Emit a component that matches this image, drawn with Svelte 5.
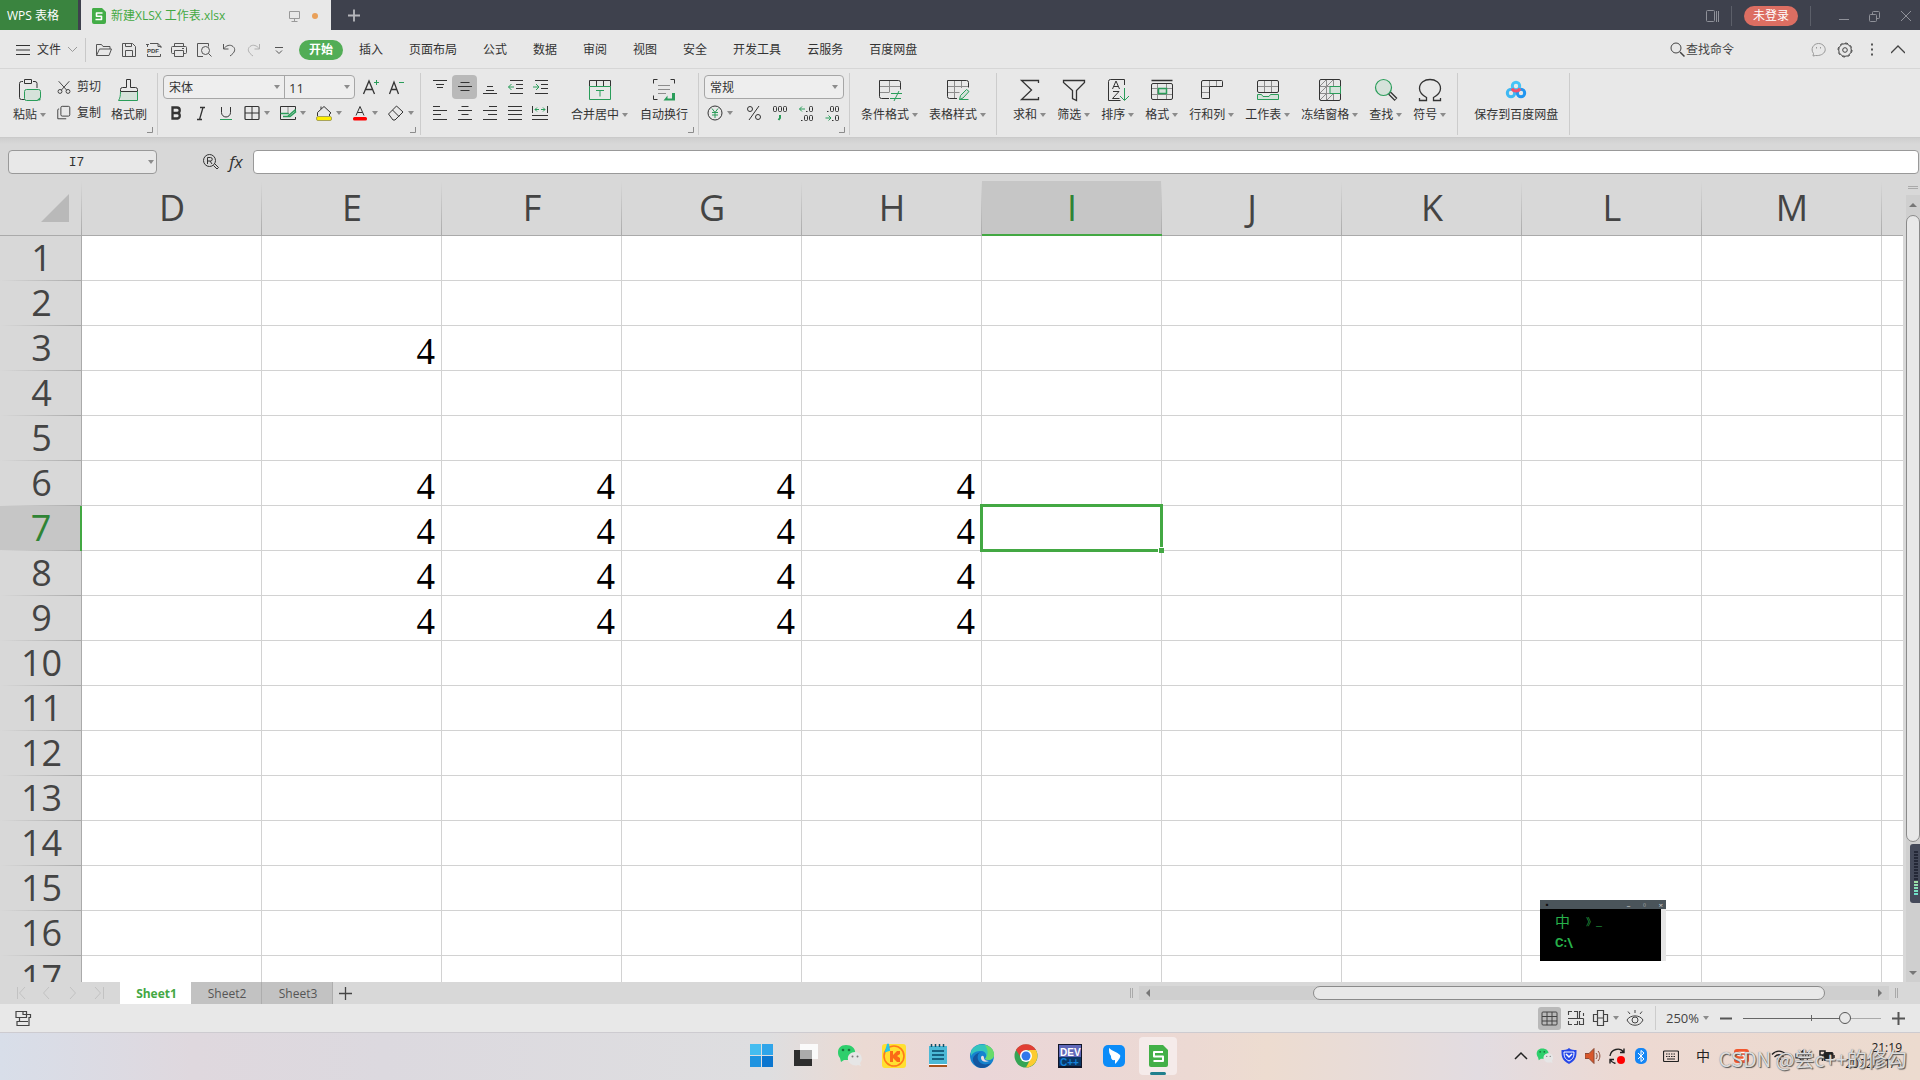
<script>
  const green = 'stroke="#2a9d5a"'
  const soft = 'stroke="#2a9d5a" fill="#d5e2da"'
  const grey = 'stroke="#8c8c8c"'

  const icons = {
    // title bar and menu
    doc: '<path d="M1 0h9l4 4v10a2 2 0 0 1-2 2H2a2 2 0 0 1-2-2V2a2 2 0 0 1 1-2z" fill="#43ad47" stroke="none"/><path d="M10.5 5h-6v3.2h5V11.5h-6" stroke="#fff" stroke-width="1.6" stroke-linejoin="round"/>',
    monitor: '<path d="M1.5 2.5h10v7h-10zM6.5 9.5v3M3.5 12.5h6"/>',
    plus: '<path d="M6.5 0v13M0 6.5h13" stroke-width="2"/>',
    thinPlus: '<path d="M6.5 0v13M0 6.5h13" stroke-width="1.3"/>',
    minus: '<path d="M0 6.5h12" stroke-width="2"/>',
    panel: '<rect x=".5" y="1.5" width="8" height="11" rx="1"/><path d="M10.5 2v11M12.5 2v11"/>',
    min: '<path d="M1 9.5h10"/>',
    restore: '<rect x=".5" y="4.5" width="7" height="7" rx="1"/><path d="M3.5 4.5v-2a1 1 0 0 1 1-1h5a1 1 0 0 1 1 1v5a1 1 0 0 1-1 1h-2"/>',
    close: '<path d="M1 1l10 10M11 1L1 11"/>',
    burger: '<path d="M0 2.5h14M0 7h14M0 11.5h14" stroke-width="1.2"/>',
    chevDown: '<path d="M0 1l4.500 4.500L9 1"/>',
    open: '<path d="M1.500 14.500v-11h5l1.500 2h7v2.500M1.500 14.500l3-6.500h12l-2.500 6.500z"/>',
    save: '<path d="M2.500 2.500h10l3 3v10h-13zM5.500 15.500v-6h7v6M5.500 2.500v3h6v-3"/>',
    pdf: '<path d="M2.500 6v-2.500M5 2.500h8l3 3v1.500M2.500 13v2.500h13v-2.500M1 3.500h3M13 2.500v3h3"/><text x="2" y="12" font-size="6" font-weight="bold" font-family="Liberation Sans" fill="#444" stroke="none">PDF</text>',
    print: '<path d="M4.500 5.500v-3h9v3M4.500 12.500h-2a1 1 0 0 1-1-1v-5a1 1 0 0 1 1-1h13a1 1 0 0 1 1 1v5a1 1 0 0 1-1 1h-2M4.500 9.500h9v6h-9zM12 7.500h2"/>',
    preview: '<path d="M8 15.500H2.500v-13h11v3"/><circle cx="10.500" cy="9.500" r="4"/><path d="M13.500 12.500l3 3"/>',
    undo: '<path d="M3.500 3v5h5M3.500 8C6 4.500 10 3 13 5.500s2 6-3 9.500"/>',
    redo: '<path d="M14.500 3v5h-5M14.500 8C12 4.500 8 3 5 5.500s-2 6 3 9.500" stroke="#b0b0b0"/>',
    more: '<path d="M5 6.500h8M6 9.500l3 3 3-3"/>',
    search: '<circle cx="6" cy="6" r="5"/><path d="M10 10l4.500 4.500" stroke-width="1.500"/>',
    smile: '<path d="M4.500 13.500L2 14l.5-2.500C-1 7 2.500 1.500 7.500 1.500S15 6 14 9s-5 5-9.500 4.500z" stroke="#999"/><path d="M5.500 5v1.500M9.500 5v1.500" stroke="#999"/>',
    gear: '<circle cx="8" cy="8" r="6.300"/><circle cx="8" cy="8" r="7" stroke-dasharray="2.750 2.750"/><circle cx="8" cy="8" r="2.300"/>',
    dots: '<path d="M8 2.500h2v2H8zM8 7.500h2v2H8zM8 12.500h2v2H8z" fill="#555" stroke="none"/>',
    chevUp: '<path d="M0 8l7-7 7 7" stroke-width="1.300"/>',

    // large ribbon icons
    paste: '<path d="M8 21.500H3.500a2 2 0 0 1-2-2v-14a2 2 0 0 1 2-2H5M15 3.500h2a2 2 0 0 1 2 2V10M6.500 1.500h7v4h-7z"/><path d="M8.500 11.500h12a2 2 0 0 1 2 2v6l-3 3h-11a2 2 0 0 1-2-2v-7a2 2 0 0 1 2-2z" ' + soft + '/><path d="M22.500 19l-4 3.500h3a1 1 0 0 0 1-1z" fill="#2a9d5a" stroke="none"/>',
    brush: '<path d="M3.500 13.500h17v9h-17z" fill="#d5e2da" stroke="none"/><path d="M3.500 13.500v-2a2 2 0 0 1 2-2h4v-8h4v8h5a2 2 0 0 1 2 2v2z"/><path d="M3.500 13.500c0 4-.5 7-2 9h19v-9" ' + green + '/>',
    merge: '<path d="M1.500 8.500V2.500h21v6M8.500 2.500v6M15.500 2.500v6"/><path d="M1.500 8.500h21v13h-21zM8 12.500h8M12 12.500v6" ' + green + '/>',
    wrap: '<path d="M1.500 5.500v-4h4M18.500 1.500h4v4M1.500 17.500v4h4"/><path d="M6 7.500h12M6 11.500h12M6 15.500h8" ' + grey + '/><path d="M20 15h3v7.500H11.500l4-5v3H20z" fill="#2a9d5a" stroke="none"/>',
    cond: '<path d="M11.500 2v12" ' + grey + '/><path d="M1.500 8.500h21M1.500 14.500h10" ' + grey + '/><path d="M11 20.500H3.500a2 2 0 0 1-2-2v-16h19a2 2 0 0 1 2 2v7"/><path d="M13 15.500h11M12 20.500h11M21 13l-5 10" ' + green + '/>',
    tstyle: '<path d="M8.500 2v18M15.500 2v8M1.500 8.500h21M1.500 14.500h12" ' + grey + '/><path d="M11 20.500H3.500a2 2 0 0 1-2-2v-16h19a2 2 0 0 1 2 2v5"/><path d="M13.500 21.500l1-4 6-6 2.500 2-6 6.500-3.500 1.500h9" ' + soft + '/>',
    sum: '<path d="M20.500 5v-2.500h-17l10 9.500-10 9.500h17V19" stroke-width="1.300"/>',
    filter: '<path d="M1.500 2.500h21v2l-8 8v10l-4-2v-8l-9-8z" stroke-width="1.300"/>',
    sort: '<path d="M18.500 7V1.500h-14a2 2 0 0 0-2 2v19h12"/><path d="M6.500 11l3.500-8 3.500 8M8 8.500h4M7 13.500h6l-6.500 7H13.500"/><path d="M18.500 10v12M14 18l4.500 4.500L23 18" ' + green + '/>',
    format: '<path d="M1.500 2.500h21" stroke-width="1.500"/><path d="M7.500 6v15M16.500 6v15M2 10.500h20M2 16.500h20" ' + grey + '/><rect x="1.500" y="5.500" width="21" height="16" rx="1.500"/><rect x="8.500" y="10.500" width="8" height="5" ' + soft + ' stroke-width="1.500"/>',
    rowcol: '<path d="M9.500 2v6M16.500 2v6M2 8.500h7M2 14.500h7" ' + grey + '/><path d="M3 2.500h18.500a1 1 0 0 1 1 1v5h-13v12h-7a1 1 0 0 1-1-1V4a1.500 1.500 0 0 1 1.500-1.500z"/>',
    sheet: '<path d="M8.500 2v12M15.500 2v12M2 8.500h20" ' + grey + '/><rect x="1.500" y="2.500" width="21" height="12" rx="1.500"/><path d="M1.500 16.500h4l1.500 2h6l1.500-2h8v5h-21z" ' + soft + '/>',
    freeze: '<path d="M8.500 2v20M15.500 2v20M2 8.500h20M2 15.500h20M2 8l6-6M9 8l6-6M2 15l6-6M2 22l6-6M9 22l6-6" ' + grey + '/><rect x="1.500" y="1.500" width="21" height="21" rx="1.500"/><path d="M12 8.500h10.500v7H12z" ' + soft + '/>',
    find: '<path d="M15.500 15l6.500 6.500" stroke-width="4"/><path d="M16 15.500l5.500 5.500" stroke="#e8e8e8" stroke-width="1.500"/><circle cx="9.500" cy="9.500" r="8" ' + soft + ' stroke-width="1.200"/>',
    omega: '<path d="M1.500 20v2.500h7v-3C4 17 1.500 14.500 1.500 10.500c0-12 21-12 21 0 0 4-2.500 6.500-7 9v3h7V20" stroke-width="1.300"/>',
    pan: '<circle cx="7" cy="15" r="3.700" stroke="#3fb8f3" stroke-width="3"/><circle cx="17" cy="15" r="3.700" stroke="#2196f0" stroke-width="3"/><circle cx="12" cy="8" r="3.700" stroke="#45c4f6" stroke-width="3"/><path d="M8 10.500a4.500 4.500 0 0 0 8 0" stroke="#f4506c" stroke-width="3"/>',

    // small ribbon icons
    cut: '<path d="M3 2.500l9 10M15 2.500l-9 10"/><circle cx="4.500" cy="14" r="2.200"/><circle cx="13.500" cy="14" r="2.200"/>',
    copy: '<rect x="5.500" y="1.500" width="10" height="11" rx="1.500"/><path d="M3.500 4.500h-.5a1 1 0 0 0-1 1V15.500h9.500"/>',
    fontUp: '<path d="M1.500 16L7 3l5.500 13M3.500 11.500h7" stroke-width="1.300"/><path d="M12 4.500h5M14.500 2v5" ' + green + '/>',
    fontDown: '<path d="M2.500 16L7 4l4.500 12M4 11.500h6" stroke-width="1.300"/><path d="M12 4.500h5" ' + green + '/>',
    bold: '<path d="M5.500 3.500h4.500a2.700 2.700 0 0 1 0 5.500H5.500zM5.500 9h5a2.800 2.800 0 0 1 0 5.500h-5z" stroke-width="2.300"/>',
    italic: '<path d="M8 3.500h5M5 15.500h5M11 3.500l-3.500 12" stroke-width="1.300"/>',
    underline: '<path d="M4.500 3v5.500a4.500 4.500 0 0 0 9 0V3"/><path d="M3 15.500h12" ' + green + '/>',
    borders: '<rect x="2" y="2.500" width="14" height="13" rx="1" stroke-width="1.200"/><path d="M9 2.500v13M2 9h14"/>',
    cells: '<path d="M9 3v6M2 9.500h8" ' + grey + '/><path d="M16.500 7V2.500h-15v13h15V13"/><path d="M1.500 9.500h8M9 12l7-6 .5 2-5.500 4.500H4" ' + green + ' stroke-width="1.500"/>',
    fill: '<path d="M2.500 12V8.500L9 2.500l7 6.500-1.500 1v2M6 5v-2.500"/><rect x="1.500" y="12.500" width="15" height="4" rx="1.500" fill="#ffef00" stroke="#a8a35a"/>',
    color: '<path d="M5 11.500L9 2.500l4 9M6.500 8.500h5"/><rect x="2" y="13" width="14" height="3.500" rx="1.500" fill="#f00" stroke="none"/>',
    eraser: '<path d="M1.500 10l8-8 6.500 6-8 8H6zM5.500 6l6.500 6.500"/>',
    vTop: '<path d="M2 2.500h14M5 6.500h8M6 9.500h6" stroke-width="1.200"/>',
    vMid: '<path d="M4.500 4.500h9M2 8.500h14M4.500 12.500h9" stroke-width="1.200"/>',
    vBot: '<path d="M6 8.500h6M5 12.500h8M2 15.500h14" stroke-width="1.200"/>',
    outdent: '<path d="M4 2.500h13M10 6.500h7M10 10.500h7M4 15.500h13"/><path d="M8 9H2.500M5.500 6l-3 3 3 3" ' + green + '/>',
    indent: '<path d="M4 2.500h13M10 6.500h7M10 10.500h7M4 15.500h13"/><path d="M2 9h5.500M5 6l3 3-3 3" ' + green + '/>',
    left: '<path d="M2 2.500h7M2 6.500h14M2 10.500h8M2 15.500h14" stroke-width="1.200"/>',
    center: '<path d="M5.500 2.500h7M2 6.500h14M5.500 10.500h7M2 15.500h14" stroke-width="1.200"/>',
    right: '<path d="M8 2.500h8M2 6.500h14M7 10.500h9M2 15.500h14" stroke-width="1.200"/>',
    justify: '<path d="M2 2.500h14M2 6.500h14M2 10.500h14M2 15.500h14" stroke-width="1.200"/>',
    spread: '<path d="M1.500 2v7M16.500 2v7M1 11.500h16M1 15.500h16"/><path d="M8 5.500H4M6 3.500l-2 2 2 2M10 5.500h4M12 3.500l2 2-2 2" ' + green + '/>',
    yen: '<circle cx="9" cy="9" r="7"/><path d="M6 4.500l3 4 3-4M9 8.500v5.500M6 8.500h6M6 11h6" ' + green + '/>',
    percent: '<circle cx="5" cy="5" r="2.500"/><circle cx="13" cy="13" r="2.500"/><path d="M14 2L4 16"/>',
    thousand: '<rect x="2.500" y="2.500" width="3" height="5" rx="1"/><rect x="7.500" y="2.500" width="3" height="5" rx="1"/><rect x="12.500" y="2.500" width="3" height="5" rx="1"/><path d="M9 11v3l-1.500 2" ' + green + ' stroke-width="2"/>',
    decMore: '<path d="M8 5H2.500M5 2.500L2.500 5 5 7.500" ' + green + '/><rect x="12.500" y="2.500" width="3" height="5" rx="1"/><rect x="7.500" y="11.500" width="3" height="5" rx="1"/><rect x="12.500" y="11.500" width="3" height="5" rx="1"/><path d="M9 7.500h1.500M4 16.500h1.500"/>',
    decLess: '<path d="M2.500 14h5.500M5.500 11.500L8 14l-2.500 2.500" ' + green + '/><rect x="7.500" y="2.500" width="3" height="5" rx="1"/><rect x="12.500" y="2.500" width="3" height="5" rx="1"/><rect x="12.500" y="11.500" width="3" height="5" rx="1"/><path d="M4 7.500h1.500M9 16.500h1.500"/>',
    arrow: '<path d="M0 0h6L3 4z" fill="#8c8c8c" stroke="none"/>',
    corner: '<path d="M5.500 0v5.500H0" ' + grey + '/>',
    nameZoom: '<circle cx="7.500" cy="7.500" r="6"/><path d="M5.500 11V4.500h3a1.500 1.500 0 0 1 0 3.500h-3M8 8l2 3M11.500 12.500l3.500 3.500 1.500-1.500-3.500-3.500"/>',

    // sheet navigation and status bar
    first: '<path d="M1.500 1v12M9 1L3.500 7 9 13"/>',
    prev: '<path d="M7 1L1.500 7 7 13"/>',
    next: '<path d="M2 1l5.500 6L2 13"/>',
    last: '<path d="M1 1l5.500 6L1 13M9.500 1v12"/>',
    macro: '<path d="M1 1.500h10.500v6H1zM8 1.500v3h3.500M11.500 4.500h4v3h-1.500v8h-12v-4h11M4.500 7.500v4" stroke-width="1.200"/>',
    grid: '<rect x="1" y="2" width="15" height="13" rx="1"/><path d="M1 6.500h15M1 11h15M6 2v13M11 2v13"/>',
    pageBreak: '<path d="M1.500 6V2.500H5M7 2.500h3.500v6.500M1.500 12v3.500H5M7 15.500h3.500V12M1 9.500h15.500M12.500 9V2.500h1.500M16.500 4v3M16.500 9.500v6h-4V12" stroke-width="1.100"/>',
    pageLayout: '<path d="M5.500 1.500h6v15h-6zM5.500 5.500h-4v7h4M11.500 5.500h4v7h-4M5.500 9h6" stroke-width="1.200"/>',
    eye: '<path d="M1 11c3-5.500 13-5.500 16 0-3 7-13 7-16 0z"/><circle cx="9" cy="11" r="3"/><path d="M9 1v3M2 2.500l2 2.500M16 2.500L14 5"/>',
    tri: '<path d="M0 4l4-4v8z" fill="#777" stroke="none"/>',

    // taskbar
    windows: '<path d="M1 1h11v11H1z" fill="#45bdf0" stroke="none"/><path d="M13 1h11v11H13z" fill="#2fa5ea" stroke="none"/><path d="M1 13h11v11H1z" fill="#1f94e0" stroke="none"/><path d="M13 13h11v11H13z" fill="#0b76cf" stroke="none"/>',
    tasks: '<path d="M1 7h18v16H1z" fill="#2e2e2e" stroke="none"/><path d="M7 1h18v15H7z" fill="#fafafa" stroke="none"/><path d="M7 7h12v9H7z" fill="#ababab" stroke="none"/>',
    wechat: '<path d="M3 15C-1 10 1 2 9 2s11 6 8 11-8 4-10 4l-3 2z" fill="#2ecf6c" stroke="none"/><circle cx="6" cy="7" r="1.300" fill="#17763c" stroke="none"/><circle cx="12" cy="7" r="1.300" fill="#17763c" stroke="none"/><path d="M23 20c4-4 1-11-5-11s-9 6-6 10 7 4 9 3l3 1z" fill="#e6e6e6" stroke="none"/><circle cx="15.500" cy="13.500" r="1" fill="#777" stroke="none"/><circle cx="20.500" cy="13.500" r="1" fill="#777" stroke="none"/>',
    kuwo: '<rect x="1" y="1" width="24" height="24" rx="3" fill="#ffe031" stroke="none"/><circle cx="13" cy="13" r="10" stroke="#ff7a1a" stroke-width="1.600"/><path d="M9 8h3v4l4-4h3v3l-3 2 3 2v4h-3l-4-4v4H9z" fill="#fb6b16" stroke="none"/><path d="M7 1l1 6-3 1z" stroke="#25c5e8" stroke-width="2"/>',
    notepad: '<path d="M4 3h18v19H4z" fill="#4cb9d6" stroke="none"/><path d="M4 21h18v3H4z" fill="#a9541d" stroke="none"/><path d="M4 21h18v1H4z" fill="#fff" stroke="none"/><path d="M6.500 1v3M10.500 1v3M14.500 1v3M18.500 1v3" stroke="#114f68" stroke-width="1.500"/><path d="M7 8h12M7 12h12M7 16h12" stroke="#176181" stroke-width="2"/>',
    edge: '<circle cx="13" cy="13" r="12" fill="#1683ce" stroke="none"/><path d="M2 9C5-2 24-1 25 12c0 5-6 6-9 4 3-4 0-8-4-8S4 9 2 13z" fill="#34c5bd" stroke="none"/><path d="M16 2c6 1 10 6 9 11-1 4-6 5-9 3 4-5 3-9 0-14z" fill="#69db69" stroke="none"/><path d="M9 12c-2 7 5 12 13 8-5 8-16 6-18-2-1-5 4-8 8-9-2 1-3 2-3 3z" fill="#14569f" stroke="none"/><path d="M15 15c0 2 2 3 5 3-4 2-8 0-8-3s3-3 3 0z" fill="#eedee1" stroke="none"/>',
    chrome: '<circle cx="13" cy="13" r="11.500" fill="#35a554" stroke="none"/><path d="M3 7a11.500 11.500 0 0 1 20 0H13l-4 9z" fill="#e13e34" stroke="none"/><path d="M23 7c4 8-1 17-10 17.500L18 15l-2-8z" fill="#fccb31" stroke="none"/><circle cx="13" cy="13" r="6" fill="#fff" stroke="none"/><circle cx="13" cy="13" r="4.500" fill="#3277ea" stroke="none"/>',
    dev: '<path d="M1 1h24v24H1z" fill="#111528" stroke="none"/><path d="M2 2h22v12H2z" fill="#6068b8" stroke="none"/><path d="M2 14h22v9H2z" fill="#0b3766" stroke="none"/><text x="3" y="13" font-size="10" font-weight="bold" font-family="Liberation Sans" fill="#fff" stroke="none">DEV</text><text x="3" y="23" font-size="10" font-weight="bold" font-family="Liberation Sans" fill="#1583dc" stroke="none">C++</text>',
    ding: '<rect x="2" y="2" width="22" height="22" rx="5" fill="#0c8cf8" stroke="none"/><path d="M8 5c3 3 8 4 11 7 1 2-1 4-3 7l-2 2 0-4c-4 1-4-3-4-4-2-2-2-5-2-8z" fill="#fff" stroke="none"/>',
    wps: '<path d="M4 2h14l5 5v15a2 2 0 0 1-2 2H6a2 2 0 0 1-2-2z" fill="#43b047" stroke="none"/><path d="M18 9H9v4.500h9V18H8.500" stroke="#fff" stroke-width="2" stroke-linejoin="round"/>',
    trayUp: '<path d="M2 11l6-6 6 6" stroke="#222" stroke-width="1.500"/>',
    shield: '<path d="M8 0c2 2 5 2 7.500 2 0 6 0 10-7.500 14C.5 12 .5 8 .5 2 3 2 6 2 8 0z" fill="#2748e8" stroke="none"/><path d="M3 4h10c0 5-1 7-5 9-4-2-5-4-5-9z" stroke="#fff" /><path d="M5 6l3 3 3-3" stroke="#fff" stroke-width="1.500"/>',
    horn: '<path d="M0 5.500h4l5-5v15l-5-5H0z" fill="#d9572b" stroke="#8b4a35"/><path d="M11 5c1.500 2 1.500 4 0 6M13 3c2.500 3 2.500 7 0 10" stroke="#8a4b39"/>',
    sync: '<path d="M1 8C2 1 11-1 14.500 4M15 .5v4h-4M1 15.500v-4h4M1.500 12c1 2 3 3 5 3.500" stroke="#222" stroke-width="1.400"/><circle cx="12" cy="12" r="4" fill="#f00" stroke="none"/>',
    bluetooth: '<rect x="2" y="0" width="12" height="16" rx="5" fill="#1686f5" stroke="none"/><path d="M5 5l6 6-3 2.500v-11L11 5l-6 6" stroke="#fff"/>',
    keyboard: '<rect x=".5" y="3" width="15" height="10.500" rx="1" stroke="#222" stroke-width="1.200"/><path d="M3 6h10M3 8.500h10" stroke="#222" stroke-dasharray="1.500 1"/><path d="M4 11h8" stroke="#222"/>',
    sogou: '<rect x="1" y="1" width="15" height="14" rx="3" fill="#f2572e" stroke="none"/><path d="M12.500 4.500H6c-2 0-2 3 0 3h4c2 0 2 4 0 4H4" stroke="#fff" stroke-width="1.600"/>',
    wifi: '<path d="M1 6.500c4-4.500 10-4.500 14 0M3.500 9c3-3 6-3 9 0M6 11.500c1.500-1.300 2.500-1.300 4 0" stroke="#222" stroke-width="1.300"/><circle cx="8" cy="13" r="1" fill="#222" stroke="none"/>',
    volume: '<path d="M1 6h3l4-3.500v11L4 10H1z" stroke="#222" stroke-width="1.200"/><path d="M10 6c1 1.500 1 2.500 0 4M12 4c2 3 2 5 0 8" stroke="#222"/>',
    battery: '<rect x="5" y="4.500" width="9" height="8" rx="1" fill="#222" stroke="#222"/><path d="M15 7v3M1 3h5v4H1zM3.500 7v6" stroke="#222" stroke-width="1.500"/>'
  }

  const quick = [
    ['open', '打开'], ['save', '保存'], ['pdf', '输出为PDF'], ['print', '打印'],
    ['preview', '打印预览'], ['undo', '撤销'], ['redo', '恢复'], ['more', '自定义']
  ]
  const menus = ['插入', '页面布局', '公式', '数据', '审阅', '视图', '安全', '开发工具', '云服务', '百度网盘']
  const aligns = [
    ['vTop', '顶端对齐'], ['vMid', '垂直居中'], ['vBot', '底端对齐'], ['outdent', '减少缩进'], ['indent', '增加缩进'],
    ['left', '左对齐'], ['center', '水平居中'], ['right', '右对齐'], ['justify', '两端对齐'], ['spread', '分散对齐']
  ]
  const tools = [
    ['sum', '求和'], ['filter', '筛选'], ['sort', '排序'], ['format', '格式'], ['rowcol', '行和列'],
    ['sheet', '工作表'], ['freeze', '冻结窗格'], ['find', '查找'], ['omega', '符号']
  ]

  const columns = ['D', 'E', 'F', 'G', 'H', 'I', 'J', 'K', 'L', 'M', '']
  const rows = Array.from({ length: 17 }, (_, i) => i + 1)
  const block = { E: 4, F: 4, G: 4, H: 4 }
  const values = { 3: { E: 4 }, 6: block, 7: block, 8: block, 9: block }
  const active = { col: 'I', row: 7 }

  const apps = [
    ['windows', '开始'], ['tasks', '任务视图'], ['wechat', '微信'], ['kuwo', '音乐'], ['notepad', '记事本'],
    ['edge', 'Edge'], ['chrome', 'Chrome'], ['dev', 'Dev-C++'], ['ding', '钉钉'], ['wps', 'WPS']
  ]

  let zoom = 76
  let formula = ''
  let cellName = 'I7'
</script>

{#snippet icon(name, w = 18, h = w, size = w, sizeH = h)}
  <svg width={size} height={sizeH} viewBox="0 0 {w} {h}" fill="none" stroke="currentColor" aria-hidden="true">
    {@html icons[name]}
  </svg>
{/snippet}

{#snippet big(name, label, arrow = true)}
  <button class="big">
    {@render icon(name, 24)}
    <span>{label}{#if arrow}{@render icon('arrow', 6, 4)}{/if}</span>
  </button>
{/snippet}

{#snippet drop(name, label)}
  <button class="drop" aria-label={label}>
    {@render icon(name)}
    {@render icon('arrow', 6, 4)}
  </button>
{/snippet}

<div class="window">
  <header class="titlebar">
    <button class="home">WPS 表格</button>
    <div class="doc">
      {@render icon('doc', 14, 16)}
      <span class="name">新建XLSX 工作表.xlsx</span>
      <span class="muted">{@render icon('monitor', 13, 14)}</span>
      <i class="unsaved"></i>
    </div>
    <button class="add" aria-label="新建">{@render icon('plus', 13, 13, 12)}</button>
    <div class="wincontrols">
      <button aria-label="标签列表">{@render icon('panel', 14)}</button>
      <i class="bar"></i>
      <button class="login">未登录</button>
      <i class="bar"></i>
      <button aria-label="最小化">{@render icon('min', 12)}</button>
      <button aria-label="还原">{@render icon('restore', 12)}</button>
      <button aria-label="关闭">{@render icon('close', 12)}</button>
    </div>
  </header>

  <nav class="menubar">
    <button class="file">
      {@render icon('burger', 14)}
      文件
      <span class="muted">{@render icon('chevDown', 9, 7)}</span>
    </button>
    <div class="quick">
      {#each quick as [name, label]}
        <button aria-label={label}>{@render icon(name)}</button>
      {/each}
    </div>
    <button class="current">开始</button>
    {#each menus as menu}
      <button class="menu">{menu}</button>
    {/each}
    <div class="menuright">
      <button class="command">{@render icon('search', 16)}查找命令</button>
      <button aria-label="反馈">{@render icon('smile', 16)}</button>
      <button aria-label="设置">{@render icon('gear', 16)}</button>
      <button aria-label="更多">{@render icon('dots', 18)}</button>
      <button aria-label="收起功能区">{@render icon('chevUp', 14, 9)}</button>
    </div>
  </nav>

  <div class="ribbon">
    <section class="clipboard">
      {@render big('paste', '粘贴')}
      <div class="stack">
        <button>{@render icon('cut', 18, 18, 16)}剪切</button>
        <button>{@render icon('copy', 18, 18, 16)}复制</button>
      </div>
      {@render big('brush', '格式刷', false)}
      <span class="corner">{@render icon('corner', 6)}</span>
    </section>

    <section class="font">
      <div class="line">
        <div class="combo">
          <label class="family">
            <select aria-label="字体"><option>宋体</option></select>
            {@render icon('arrow', 6, 4)}
          </label>
          <label class="size">
            <select aria-label="字号"><option>11</option></select>
            {@render icon('arrow', 6, 4)}
          </label>
        </div>
        <button class="tool" aria-label="增大字号">{@render icon('fontUp')}</button>
        <button class="tool" aria-label="减小字号">{@render icon('fontDown')}</button>
      </div>
      <div class="line">
        <button class="tool" aria-label="加粗">{@render icon('bold')}</button>
        <button class="tool" aria-label="倾斜">{@render icon('italic')}</button>
        <button class="tool" aria-label="下划线">{@render icon('underline')}</button>
        <div class="drops">
          {@render drop('borders', '边框')}
          {@render drop('cells', '绘图边框')}
          {@render drop('fill', '填充颜色')}
          {@render drop('color', '字体颜色')}
          {@render drop('eraser', '清除')}
        </div>
      </div>
      <span class="corner">{@render icon('corner', 6)}</span>
    </section>

    <section class="align">
      <div class="aligns">
        {#each aligns as [name, label]}
          <button class="tool" class:on={name === 'vMid'} aria-label={label}>{@render icon(name)}</button>
        {/each}
      </div>
      {@render big('merge', '合并居中')}
      {@render big('wrap', '自动换行', false)}
      <span class="corner">{@render icon('corner', 6)}</span>
    </section>

    <section class="number">
      <div class="combo">
        <label class="kind">
          <select aria-label="数字格式"><option>常规</option></select>
          {@render icon('arrow', 6, 4)}
        </label>
      </div>
      <div class="line">
        {@render drop('yen', '货币')}
        <button class="tool" aria-label="百分比">{@render icon('percent')}</button>
        <button class="tool" aria-label="千位分隔">{@render icon('thousand')}</button>
        <button class="tool" aria-label="增加小数位">{@render icon('decMore')}</button>
        <button class="tool" aria-label="减少小数位">{@render icon('decLess')}</button>
      </div>
      <span class="corner">{@render icon('corner', 6)}</span>
    </section>

    <section class="plain">
      {@render big('cond', '条件格式')}
      {@render big('tstyle', '表格样式')}
    </section>

    <section class="plain tools">
      {#each tools as [name, label]}
        {@render big(name, label)}
      {/each}
    </section>

    <section class="plain tools">
      {@render big('pan', '保存到百度网盘', false)}
    </section>
  </div>

  <div class="formulabar">
    <label class="namebox">
      <input aria-label="名称框" bind:value={cellName} />
      {@render icon('arrow', 6, 4)}
    </label>
    <button class="lookup" aria-label="浏览">{@render icon('nameZoom', 17)}</button>
    <button class="fx">fx</button>
    <input class="formula" aria-label="编辑栏" bind:value={formula} />
  </div>

  <main>
    <div class="sheet">
      <table>
        <thead>
          <tr>
            <th class="origin"><i></i></th>
            {#each columns as col}
              <th class="col" class:sel={col === active.col}>{col}</th>
            {/each}
          </tr>
        </thead>
        <tbody>
          {#each rows as row}
            <tr>
              <th class="row" class:sel={row === active.row}>{row}</th>
              {#each columns as col}
                <td>
                  {values[row]?.[col] ?? ''}
                  {#if row === active.row && col === active.col}
                    <span class="cursor"></span>
                  {/if}
                </td>
              {/each}
            </tr>
          {/each}
        </tbody>
      </table>
    </div>

    <aside class="vscroll">
      <i class="split"></i>
      <div class="track">
        <span class="up">{@render icon('tri', 4, 8)}</span>
        <div class="thumb"></div>
        <span class="down">{@render icon('tri', 4, 8)}</span>
      </div>
      <div class="meter"><i></i></div>
    </aside>

    <!-- Floating input method window -->
    <div class="console">
      <div class="bartop"><span>▪</span><span>–</span><span>▫</span><span>×</span></div>
      <div class="screen">
        <p>中<small>》_</small></p>
        <p class="prompt">C:\</p>
      </div>
    </div>
  </main>

  <div class="tabs">
    <div class="sheetnav">
      <button aria-label="第一个">{@render icon('first', 10, 14, 10)}</button>
      <button aria-label="上一个">{@render icon('prev', 10, 14, 10)}</button>
      <button aria-label="下一个">{@render icon('next', 10, 14, 10)}</button>
      <button aria-label="最后一个">{@render icon('last', 10, 14, 10)}</button>
    </div>
    <button class="tab open">Sheet1</button>
    <button class="tab">Sheet2</button>
    <button class="tab">Sheet3</button>
    <button class="newtab" aria-label="新建工作表">{@render icon('thinPlus', 13)}</button>
    <div class="hscroll">
      <i class="grip"></i>
      <div class="track">
        {@render icon('tri', 4, 8)}
        <div class="thumb"></div>
        <span class="flip">{@render icon('tri', 4, 8)}</span>
      </div>
      <i class="grip"></i>
    </div>
  </div>

  <footer class="status">
    <button aria-label="宏">{@render icon('macro', 17)}</button>
    <div class="views">
      <button class="view on" aria-label="普通视图">{@render icon('grid', 17)}</button>
      <button class="view" aria-label="分页预览">{@render icon('pageBreak', 18)}</button>
      <button class="drop" aria-label="页面布局">{@render icon('pageLayout', 18)}{@render icon('arrow', 6, 4)}</button>
      <button class="view" aria-label="护眼模式">{@render icon('eye', 18)}</button>
      <button class="percent">250%{@render icon('arrow', 6, 4)}</button>
      <button class="step" aria-label="缩小">{@render icon('minus', 13)}</button>
      <input type="range" aria-label="缩放" bind:value={zoom} />
      <button class="step" aria-label="放大">{@render icon('plus', 13)}</button>
    </div>
  </footer>

  <div class="taskbar">
    <div class="apps">
      {#each apps as [name, label]}
        <button class:running={name === 'wps'} aria-label={label}>{@render icon(name, 26)}</button>
      {/each}
    </div>
    <div class="tray">
      <button aria-label="隐藏的图标">{@render icon('trayUp', 16)}</button>
      <button aria-label="微信">{@render icon('wechat', 26, 26, 18, 18)}</button>
      <button aria-label="安全">{@render icon('shield', 16)}</button>
      <button aria-label="音频">{@render icon('horn', 16)}</button>
      <button aria-label="更新">{@render icon('sync', 16)}</button>
      <button aria-label="蓝牙">{@render icon('bluetooth', 16)}</button>
      <button class="wide" aria-label="键盘">{@render icon('keyboard', 16)}</button>
      <button class="ime">中</button>
      <button class="sogou" aria-label="搜狗">{@render icon('sogou', 17)}</button>
      <button aria-label="网络">{@render icon('wifi', 16)}</button>
      <button aria-label="音量">{@render icon('volume', 16)}</button>
      <button aria-label="电池">{@render icon('battery', 16)}</button>
      <div class="clock"><span>21:19</span><span>2022/11/1</span></div>
    </div>
    <span class="credit">CSDN @尝c++的修勾</span>
  </div>
</div>

<style>
  :global(body) {
    background: #e8e8e8;
  }

  .window {
    display: flex;
    flex-direction: column;
    height: 100vh;
    overflow: hidden;
    color: #333;
    font: 12px/16px 'Open Sans', 'Noto Sans CJK SC', sans-serif;
  }

  button,
  input,
  select {
    margin: 0;
    padding: 0;
    border: 0;
    background: none;
    color: inherit;
    font: inherit;
  }

  button {
    display: flex;
    align-items: center;
    justify-content: center;
    white-space: nowrap;
  }

  svg {
    display: block;
    flex: none;
  }

  .muted {
    color: #999;
  }

  /* title bar */
  .titlebar {
    display: flex;
    height: 30px;
    flex: none;
    background: #3e414d;
  }

  .home {
    width: 78px;
    justify-content: flex-start;
    padding: 2px 0 0 7px;
    margin-right: 3px;
    background: #3a843f;
    color: #fff;
  }

  .doc {
    display: flex;
    align-items: center;
    gap: 5px;
    width: 250px;
    padding: 1px 12px 0 11px;
    box-sizing: border-box;
    background: #e8e8e8;
    color: #43a843;
  }

  .name {
    flex: 1;
  }

  .unsaved {
    width: 6px;
    height: 6px;
    margin: 0 1px 0 6px;
    border-radius: 50%;
    background: #e9a059;
  }

  .add {
    width: 46px;
    color: #b5b6bb;
  }

  .wincontrols {
    display: flex;
    align-items: center;
    margin-left: auto;
    padding: 2px 8px 0 0;
    color: #8f9199;
  }

  .wincontrols button {
    width: 12px;
    margin-left: 19px;
  }

  .wincontrols .bar {
    width: 1px;
    height: 20px;
    margin: 0 12px;
    background: #5c5f69;
  }

  .wincontrols .login {
    width: 54px;
    height: 20px;
    margin: 0;
    border-radius: 10px;
    background: #dc6e62;
    color: #fff;
  }

  .wincontrols .bar + button:not(.login) {
    margin-left: 15px;
  }

  /* menu bar */
  .menubar {
    display: flex;
    align-items: center;
    height: 39px;
    flex: none;
    padding-top: 1px;
    box-sizing: border-box;
    border-bottom: 1px solid #d6d6d6;
    color: #333;
  }

  .file {
    gap: 7px;
    width: 86px;
    height: 24px;
    padding-left: 8px;
    border-right: 1px solid #c8c8c8;
    box-sizing: border-box;
  }

  .quick {
    display: flex;
    margin: 0 8px 0 5px;
    color: #555;
  }

  .quick button {
    width: 25px;
  }

  .current {
    width: 44px;
    height: 20px;
    border-radius: 10px;
    background: #52ad56;
    color: #fff;
    font-weight: bold;
  }

  .menu {
    padding: 1px 13px 0;
  }

  .current + .menu {
    padding-left: 16px;
  }

  .menuright {
    display: flex;
    align-items: center;
    gap: 10px;
    margin-left: auto;
    padding-right: 15px;
    color: #444;
  }

  .command {
    margin-right: 67px;
  }

  /* ribbon */
  .ribbon {
    display: flex;
    height: 68px;
    flex: none;
    border-bottom: 1px solid #cacaca;
  }

  .ribbon section {
    position: relative;
    display: flex;
    box-sizing: border-box;
    padding-top: 6px;
    background: linear-gradient(#ccc, #ccc) right 4px / 1px 62px no-repeat;
  }

  .corner {
    position: absolute;
    right: 5px;
    bottom: 4px;
  }

  .big {
    flex-direction: column;
    justify-content: flex-start;
    gap: 5px;
    padding-top: 3px;
  }

  .big span {
    display: flex;
    align-items: center;
    gap: 3px;
  }

  .clipboard {
    gap: 10px;
    padding: 0 11px 0 13px;
  }

  .stack {
    display: grid;
    align-content: start;
    gap: 2px;
  }

  .stack button {
    gap: 5px;
    height: 24px;
  }

  .font,
  .number {
    flex-direction: column;
    gap: 2px;
    padding-left: 5px;
  }

  .number {
    padding-right: 6px;
  }

  .line {
    display: flex;
    height: 24px;
  }

  .number .line {
    gap: 1px;
  }

  .combo {
    display: flex;
    height: 24px;
    box-sizing: border-box;
    border: 1px solid #a6a6a6;
    border-radius: 4px;
    background: #eee;
  }

  .line .combo {
    margin-right: 3px;
  }

  .combo label {
    display: flex;
    align-items: center;
    padding-right: 4px;
  }

  .combo select {
    flex: 1;
    padding: 1px 0 0 5px;
    appearance: none;
    outline: none;
  }

  .family {
    width: 116px;
    border-right: 1px solid #a6a6a6;
  }

  .size {
    width: 65px;
  }

  .kind {
    width: 133px;
  }

  .size select {
    padding-left: 4px;
    font-size: 13px;
  }

  .tool {
    width: 25px;
    height: 24px;
    border-radius: 4px;
  }

  .on {
    background: #b9b9b9;
  }

  .drops {
    display: flex;
    margin-left: 3px;
  }

  .drop {
    gap: 3px;
    width: 36px;
    justify-content: flex-start;
    padding-left: 2px;
  }

  .align {
    gap: 12px;
    padding: 0 11px 0 6px;
  }

  .aligns {
    display: grid;
    grid-template-columns: repeat(5, 25px);
    align-content: start;
    gap: 2px 0;
    margin-right: 7px;
  }

  .plain {
    gap: 11px;
    padding: 0 11px;
  }

  .tools {
    padding: 0 12px 0 16px;
  }

  /* formula bar */
  .formulabar {
    display: flex;
    align-items: center;
    height: 43px;
    flex: none;
    padding: 4px 0 0 8px;
    box-sizing: border-box;
    background: linear-gradient(#cfcfcf, #d8d8d8 6px);
  }

  .namebox {
    display: flex;
    align-items: center;
    width: 149px;
    height: 24px;
    margin-right: 45px;
    padding-right: 2px;
    box-sizing: border-box;
    border: 1px solid #999;
    border-radius: 4px;
    background: #e8e8e8;
  }

  .namebox input {
    flex: 1;
    min-width: 0;
    padding: 2px 4px 0 0;
    text-align: center;
    font: 13px/16px 'Liberation Mono', monospace;
  }

  .fx {
    width: 34px;
    font: italic 17px/20px 'Open Sans', sans-serif;
  }

  .formula {
    flex: 1;
    height: 24px;
    margin-right: 1px;
    padding: 0 6px;
    box-sizing: border-box;
    border: 1px solid #999;
    border-radius: 4px;
    background: #fff;
  }

  /* grid */
  main {
    position: relative;
    display: flex;
    flex: 1;
    min-height: 0;
    background: #d8d8d8;
  }

  .sheet {
    flex: 1;
    min-width: 0;
    overflow: hidden;
    background: #fff;
  }

  table {
    width: 2062px;
    table-layout: fixed;
    border-spacing: 0;
  }

  th,
  td {
    width: 180px;
    height: 45px;
    padding: 0;
    box-sizing: border-box;
  }

  th {
    background: #d8d8d8;
    color: #444;
    font: 36px/42px 'Open Sans', sans-serif;
  }

  .col,
  .origin {
    height: 55px;
    border-bottom: 1px solid #aaa;
    background: linear-gradient(#d8d8d8, #aaa) right / 1px 100% no-repeat #d8d8d8;
  }

  .origin {
    width: 82px;
  }

  .origin i {
    display: block;
    width: 28px;
    height: 28px;
    margin-left: 41px;
    background: #b9b9b9;
    clip-path: polygon(100% 0, 100% 100%, 0 100%);
  }

  .row {
    width: 82px;
    padding: 0 0 2px 2px;
    border-right: 1px solid #aaa;
    background: linear-gradient(90deg, #d8d8d8, #aaa) bottom / 100% 1px no-repeat #d8d8d8;
  }

  .sel {
    background-color: #c6c6c6;
    color: #2f8435;
  }

  .col.sel {
    border-bottom: 2px solid #43a843;
  }

  .row.sel {
    border-right: 2px solid #43a843;
  }

  td {
    position: relative;
    padding: 8px 6px 0 0;
    border-right: 1px solid #d2d2d2;
    border-bottom: 1px solid #d2d2d2;
    color: #000;
    text-align: right;
    font: 37px/36px 'Liberation Serif', serif;
  }

  .cursor {
    position: absolute;
    z-index: 1;
    inset: -2px;
    border: 3px solid #43a843;
  }

  .cursor::after {
    content: '';
    position: absolute;
    right: -4px;
    bottom: -4px;
    width: 5px;
    height: 5px;
    border: 1px solid #fff;
    border-width: 1px 0 0 1px;
    background: #43a843;
  }

  .vscroll {
    position: relative;
    display: flex;
    flex-direction: column;
    width: 17px;
    padding-left: 3px;
    box-sizing: border-box;
  }

  .split {
    height: 1px;
    margin: 5px 2px 6px;
    border: solid #aaa;
    border-width: 1px 0;
  }

  .vscroll .track {
    display: flex;
    flex: 1;
    flex-direction: column;
    align-items: center;
    background: #cfcfcf;
  }

  .vscroll .thumb {
    width: 100%;
    box-sizing: border-box;
    flex: 0 1 627px;
  }

  .thumb {
    border: 1px solid #8a8a8a;
    border-radius: 7px;
    background: #e8e8e8;
  }

  .up {
    margin: 6px 0;
    transform: rotate(90deg);
  }

  .down {
    margin: auto 0 5px;
    transform: rotate(-90deg);
  }

  .meter {
    position: absolute;
    right: 0;
    bottom: 79px;
    width: 10px;
    height: 59px;
    padding: 7px 2px 7px 4px;
    box-sizing: border-box;
    border-radius: 3px 0 0 3px;
    background: #454a5a;
  }

  .meter i {
    display: block;
    height: 100%;
    background:
      repeating-linear-gradient(transparent 0 2px, #454a5a 2px 3px),
      linear-gradient(#242837 65%, #a5e0a0 65%, #66e0d0);
  }

  .console {
    position: absolute;
    right: 254px;
    bottom: 21px;
    width: 126px;
    background: #000;
    color: #27b04a;
  }

  .bartop {
    display: flex;
    gap: 10px;
    height: 9px;
    padding: 0 3px;
    background: #4a545a;
    color: #d0d0d0;
    font-size: 8px;
    line-height: 9px;
  }

  .bartop span:first-child {
    margin-right: auto;
    color: #111;
  }

  .screen {
    height: 52px;
    padding: 5px 15px;
    box-sizing: border-box;
    border-right: 5px solid #e6e6e6;
    font: 15px/20px 'Liberation Mono', 'Noto Sans CJK SC', monospace;
  }

  .screen p {
    display: flex;
    gap: 16px;
    margin: 0;
  }

  .screen small {
    font-size: 10px;
  }

  .screen .prompt {
    font: bold 13px/18px 'Roboto', sans-serif;
  }

  /* sheet tabs */
  .tabs {
    display: flex;
    height: 22px;
    flex: none;
    background: #d8d8d8;
  }

  .sheetnav {
    display: flex;
    gap: 16px;
    width: 104px;
    padding-left: 16px;
    color: #c2c2c2;
  }

  .tab {
    width: 71px;
    padding: 1px 0 0 2px;
    box-sizing: border-box;
    border-right: 1px solid #adadad;
    background: #c2c2c2;
    color: #555;
    font-size: 12px;
  }

  .open {
    border: 0;
    background: #fff;
    color: #43a843;
    font-weight: bold;
  }

  .newtab {
    width: 24px;
    color: #444;
  }

  .hscroll {
    display: flex;
    flex: 0 1 790px;
    align-items: center;
    gap: 6px;
    margin-left: auto;
    padding-right: 22px;
    box-sizing: border-box;
  }

  .grip {
    width: 1px;
    height: 10px;
    border: solid #aaa;
    border-width: 0 1px;
  }

  .hscroll .track {
    display: flex;
    flex: 1;
    align-items: center;
    justify-content: space-between;
    height: 14px;
    padding: 0 7px;
    background: #cfcfcf;
  }

  .hscroll .thumb {
    width: 512px;
    height: 14px;
    margin-left: auto;
    margin-right: 53px;
    box-sizing: border-box;
  }

  .flip {
    transform: scaleX(-1);
  }

  /* status bar */
  .status {
    display: flex;
    align-items: center;
    justify-content: space-between;
    height: 28px;
    flex: none;
    padding: 0 15px;
    background: #e8e8e8;
    color: #444;
  }

  .views {
    display: flex;
    align-items: center;
  }

  .view {
    width: 23px;
    height: 23px;
    margin-right: 4px;
    border-radius: 3px;
  }

  .views .drop {
    padding-left: 0;
    margin: 0 -4px 0 0;
  }

  .percent {
    gap: 4px;
    height: 24px;
    margin-left: 4px;
    padding-left: 10px;
    border-left: 1px solid #ccc;
    font-size: 13px;
  }

  .step {
    width: 34px;
    color: #555;
  }

  .step:last-child {
    width: 13px;
    margin-left: 11px;
  }

  .views input {
    width: 138px;
    height: 14px;
    appearance: none;
    background:
      linear-gradient(#666, #666) 68px 4px / 1px 6px no-repeat,
      linear-gradient(90deg, #666 75%, #aaa 75%) 0 7px / 100% 1px no-repeat;
  }

  .views input::-webkit-slider-thumb {
    width: 12px;
    height: 12px;
    box-sizing: border-box;
    appearance: none;
    border: 1px solid #555;
    border-radius: 50%;
    background: #e8e8e8;
  }

  /* taskbar */
  .taskbar {
    position: relative;
    display: grid;
    grid-template-columns: 1fr auto 1fr;
    align-items: center;
    height: 48px;
    flex: none;
    padding-bottom: 1px;
    box-sizing: border-box;
    border-top: 1px solid #cdcbd0;
    background: linear-gradient(90deg, #d8dee9, #dfd8de 10%, #dcd9df 20%, #dedee0 40%, #ebdad3 45%, #ead6d8 51%, #ecd9d3 62%, #eddcd0 66%, #e2dce1 77%, #edd9d2 85%, #ecdbcf);
  }

  .apps {
    display: flex;
    grid-column: 2;
    gap: 6px;
  }

  .apps button {
    position: relative;
    width: 38px;
    height: 38px;
  }

  .apps .running {
    border-radius: 4px;
    background: #f5ebea;
  }

  .running::after {
    content: '';
    position: absolute;
    bottom: 0;
    width: 16px;
    height: 3px;
    border-radius: 2px;
    background: #21808d;
  }

  .tray {
    display: flex;
    align-items: center;
    justify-content: flex-end;
    padding-right: 18px;
    color: #222;
  }

  .tray button {
    width: 24px;
  }

  .tray .wide {
    width: 36px;
  }

  .tray .ime {
    width: 28px;
    font-size: 14px;
  }

  .tray .sogou {
    margin: 0 14px 0 12px;
  }

  .clock {
    display: grid;
    width: 58px;
    margin-left: 5px;
    text-align: right;
  }

  .credit {
    position: absolute;
    right: 13px;
    bottom: 9px;
    color: #dcdcdc;
    font: 20px/24px 'Noto Sans CJK SC', sans-serif;
    text-shadow: 1px 1px 1px #555, 0 0 1px #777;
  }
</style>
